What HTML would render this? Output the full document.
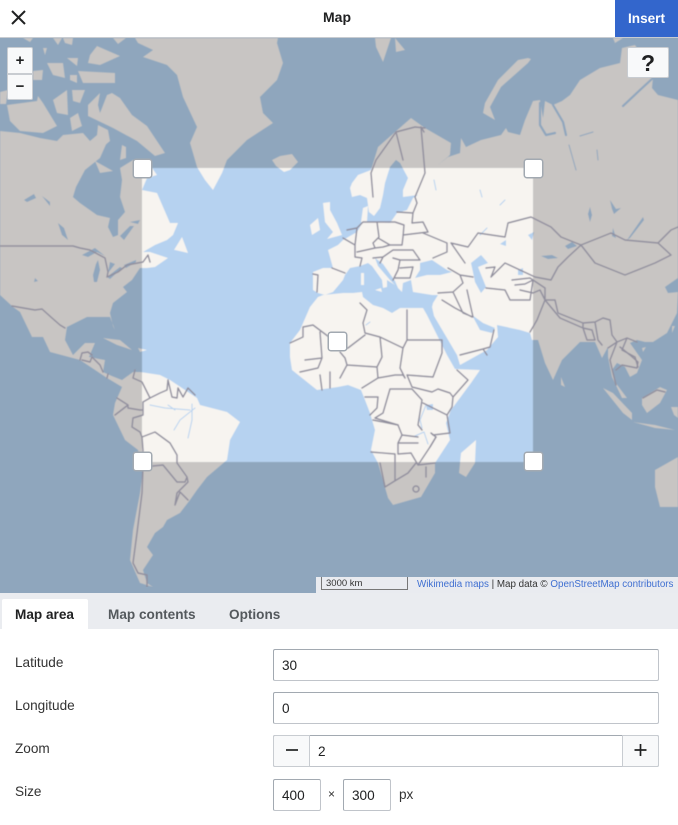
<!DOCTYPE html>
<html lang="en">
<head>
<meta charset="utf-8">
<title>Map</title>
<style>
html,body{margin:0;padding:0;background:#fff}
body{width:678px;height:825px;position:relative;overflow:hidden;font-family:"Liberation Sans",sans-serif;color:#202122;font-size:13.6px}
.abs{position:absolute}
svg.map{position:absolute;left:0;top:0}
.l{fill:var(--l);stroke:none}
.w{fill:var(--w);stroke:none}
.wl{fill:none;stroke:var(--w);stroke-linecap:round;stroke-linejoin:round}
.b{fill:none;stroke:#918f9e;stroke-width:1.45;stroke-linejoin:round;stroke-linecap:round}
.h{position:absolute;width:17px;height:17px;background:#fff;border:1px solid #a2a9b1;border-radius:3px;box-shadow:0 0 0 .5px #a2a9b1}
.ctl{position:absolute;background:#f8f9fa;border:1px solid #c8ccd1;box-sizing:border-box;text-align:center;font-weight:bold;color:#202122}
.tab{position:absolute;top:599px;height:30px;line-height:31px;font-weight:bold;color:#54595d}
.lab{position:absolute;left:15px;color:#333;line-height:20px}
.inp{position:absolute;box-sizing:border-box;height:32px;border:1px solid #a2a9b1;border-radius:2px;background:#fff;padding-left:8px;line-height:31px;color:#202122;border-bottom-color:#c0c4ca;border-right-color:#c0c4ca}
.btn{position:absolute;box-sizing:border-box;width:37px;height:32px;background:#f8f9fa;border:1px solid #c8ccd1;top:735px}
</style>
</head>
<body>
<svg class="map" width="678" height="593" viewBox="0 0 678 593" xmlns="http://www.w3.org/2000/svg">
<defs>
<filter id="s" x="0" y="0" width="1" height="1"><feGaussianBlur stdDeviation="0.5"/></filter>
<clipPath id="hi"><rect x="142" y="168" width="391" height="294"/></clipPath>
<g id="world">
<path class="l" d="M135,38 138,43 153,50 143,57 167,65 177,75 183,97 197,127 190,143 197,167 205,180 213,190 222,173 227,160 247,140 273,123 263,113 260,97 277,80 283,63 277,43 278,38Z"/>
<path class="l" d="M272,160 280,156 292,154 298,162 290,170 284,172 276,166Z"/>
<path class="l" d="M0,131 20,133 40,138 57,141 63,135 83,133 90,141 97,135 108,140 100,158 85,170 76,187 73,197 80,203 97,215 110,218 108,227 113,237 118,235 118,220 125,212 120,197 122,180 120,168 133,160 142,166 152,168 157,175 147,178 142,190 157,193 170,223 178,223 173,235 167,240 155,245 143,252 150,252 168,258 155,267 147,268 140,268 132,280 123,287 127,292 113,303 110,313 113,326 115,330 110,317 87,317 67,327 65,340 73,355 85,343 95,343 89,357 105,360 103,372 112,376 122,380 133,372 140,372 160,375 170,380 197,398 200,405 227,412 240,422 230,440 227,460 207,477 197,490 190,500 180,513 167,520 163,527 155,533 147,547 153,555 143,570 147,583 153,587 140,583 130,560 133,530 140,493 143,470 138,450 125,440 113,415 115,403 122,387 107,378 98,372 80,360 50,352 43,337 32,337 20,312 13,307 0,295Z"/>
<path class="l" d="M112,93 120,98 132,115 147,126 165,153 155,156 137,141 113,128 88,116 88,105 100,93 98,105 100,113 107,95Z"/>
<path class="l" d="M7,105 37,101 38,96 43,103 57,126 43,133 20,131 10,121Z"/>
<path class="l" d="M53,100 67,90 68,115 57,113Z M72,90 85,90 80,103 73,101Z M70,118 78,113 82,126 72,131Z M78,71 115,73 115,83 83,83Z M90,55 97,46 120,56 100,65 88,63Z M67,58 78,58 77,66Z M70,75 77,75 77,83 70,80Z M47,63 63,63 65,78 53,75Z M33,71 43,70 42,80 33,80Z M63,38 73,38 72,45 65,43Z M23,38 33,38 30,42Z M53,38 62,38 58,45Z M43,48 47,48 45,55Z M113,38 126,38 118,44Z M0,92 8,90 6,104 0,104Z M95,161 113,171 100,173Z M120,160 126,158 126,147 122,145Z M126,166 136,160 142,166 132,172Z M98,125 108,130 110,141 103,147 97,135Z"/>
<path class="l" d="M174,250 182,237 188,253 175,250Z M103,338 120,340 132,350 117,345Z M138,348 147,350 140,352Z"/>
<path class="l" d="M352,183 358,175 371,170 378,147 395,132 411,118 425,128 451,143 450,155 438,165 448,157 460,153 461,138 466,147 481,140 501,135 506,128 508,132 520,135 525,120 533,101 540,100 543,118 545,101 553,105 562,101 570,95 580,80 600,68 620,63 622,48 635,45 645,60 653,78 652,88 658,95 678,100 678,278 665,287 668,293 678,292 677,313 667,333 653,342 645,342 637,340 630,343 642,360 637,373 630,377 625,367 617,363 612,370 615,382 627,398 622,398 612,377 608,357 608,347 602,358 595,342 580,342 562,360 553,380 545,363 538,340 532,340 530,333 520,330 497,325 498,337 487,350 460,365 457,355 444,333 434,316 432,307 433,303 438,295 432,295 413,292 411,280 403,283 402,292 398,288 395,281 383,264 375,258 378,266 390,280 395,285 387,280 387,287 383,288 382,280 372,266 368,263 360,266 350,268 345,275 343,280 333,292 325,295 318,293 313,290 313,272 323,268 333,268 328,250 338,245 343,240 357,232 363,222 377,222 390,223 397,213 407,210 413,198 418,195 403,197 403,190 408,178 400,163 396,160 390,167 385,183 383,195 380,208 374,216 369,212 367,198 360,195 352,197 350,188Z"/>
<path class="l" d="M528,58 518,60 498,80 485,103 483,113 495,120 490,107 501,87 528,63 531,59Z M375,38 391,38 383,62 376,47Z M395,38 405,50 396,52Z M613,38 623,38 615,43Z"/>
<path class="l" d="M363,208 368,206 367,222 361,222Z M323,203 330,202 330,210 337,223 342,235 327,239 333,232 325,222Z M310,225 318,218 320,230 312,235Z M361,273 364,273 364,285 361,285Z M375,290 381,288 382,292Z"/>
<path class="l" d="M310,307 318,297 323,295 343,293 353,293 362,292 363,297 373,305 383,308 392,313 400,308 423,308 427,315 447,355 455,369 480,370 471,383 451,410 446,423 450,440 435,463 435,473 421,497 393,505 388,498 378,463 371,450 375,430 370,413 365,400 361,390 348,385 338,387 317,390 292,370 290,357 290,343 300,330Z"/>
<path class="l" d="M476,440 475,463 466,477 459,473 461,453Z M561,377 565,387 561,385Z M642,348 646,347 643,352Z M672,326 675,326 672,333Z"/>
<path class="l" d="M642,398 660,387 667,390 660,403 647,413 642,405Z M603,388 613,393 632,413 632,420 623,413Z M633,422 655,425 675,430 655,428Z M671,407 678,407 678,418 674,415Z M655,470 678,457 678,507 660,507 655,487Z"/>
<path class="w" d="M420,263 432,260 447,270 452,272 440,275 427,275 415,278 420,270Z M471,263 481,255 488,263 478,267 486,287 481,293 475,282 473,272Z M472,315 480,330 492,333 495,328 483,323Z M627,240 643,217 644,220 630,238Z M541,256 552,255 558,258 548,259Z M426,405 433,404 433,410 427,410Z M518,270 523,268 523,275 518,275Z"/>
<path class="w" d="M93,275 96,264 98,260 100,270 97,282 94,282Z M82,255 95,248 105,256 97,252 88,257Z M105,260 115,264 108,273 110,262Z M107,277 120,267 122,268 110,279Z M124,265 136,260 136,262 126,268Z M58,223 64,228 68,240 62,235Z M24,200 34,194 36,198 27,202Z M42,196 50,202 50,206Z M120,236 130,226 134,226 124,240Z M130,222 140,220 138,224Z M35,278 38,281 34,282Z"/>
<path class="w" d="M528,235 534,232 532,240Z M500,244 506,240 506,246Z M610,200 616,209 621,208 614,214 612,209Z M565,246 572,242 577,246 568,249Z M590,207 592,215 590,222 588,214Z M613,228 616,238 612,236Z"/>
<path class="wl" stroke-width="2.2" d="M653,78 640,90 623,106 M540,103 540,125 546,135 555,133 M553,105 563,122 566,135"/>
<path class="wl" stroke-width="1" d="M569,145 576,170 M580,136 593,132 M597,150 598,160 M150,405 165,408 190,410 M195,408 180,420 174,430 M192,404 192,420 188,438 M168,405 175,410 M415,436 424,432 428,444 M426,405 420,420 422,428 M366,325 370,322 M480,190 482,197 M434,180 436,190 M500,205 505,200 M480,235 487,228"/>
</g>
<g id="bord">
<path class="b" d="M0,246H73L80,248 90,250 105,258 108,272 107,277 118,272 127,265 143,262 148,255 150,262M12,306 35,310 42,309 52,318 60,325 65,328M80,360 82,353 88,352 92,355M82,360 90,362 92,357 100,365 103,372M107,378 108,374"/>
<path class="b" d="M135,370 133,378 142,382 150,398 143,402 143,415 133,418 132,427 140,432 142,437 143,450 143,467 142,493 137,533 133,563 138,573 147,575 147,587M117,398 128,405 128,408 140,410 143,410M115,415 128,405M150,398 160,393 167,390 168,380 172,397 177,398 178,388 183,397 188,388 195,395M142,437 155,432 170,443 177,455 177,463 187,477 185,482 177,482 163,465 143,467M187,477 188,482 177,493 175,505 180,492 188,500"/>
<path class="b" d="M360,303 367,310 363,323 365,333 380,337 403,348M407,310V340H442M403,348 407,340M403,348 400,368 405,378M380,337 382,357 377,367 378,378 395,375 403,375 405,378M365,335 348,348 340,350M290,343 303,337 303,327 313,325 333,340M320,332 322,358 305,360M442,340 442,353 433,377 407,375 412,387 432,392 438,389M457,370 468,380 453,397 452,407M438,389 450,393 453,397M452,407 447,415 423,403M390,389 412,389 422,400 418,425 422,430M390,389 383,413 375,418 398,425 402,435 418,437M365,397 378,397 377,408 370,415M347,365 377,367M378,378 362,388M423,403 447,415 450,433 433,435 431,433 436,437 430,447M340,352 345,358 347,365 340,378M300,372 318,368 322,358M320,375 322,390M330,372 330,388"/>
<path class="b" d="M371,452 395,454 395,480M373,420 398,425M398,443 398,454M398,454 411,453 418,465 435,463M426,467 426,477M380,463 385,487 393,482 408,473 416,463M436,437 430,447 418,465M402,435 398,443 418,443"/>
<circle class="b" cx="416" cy="489" r="3"/>
<path class="b" d="M332,268 345,273M313,274 318,275 317,292M343,238 355,245 355,257 362,258 360,266M347,230 357,228 355,245M357,228 363,222 377,222 379,237 373,243 375,248 357,252M377,222H395L404,225 403,237 402,245 390,245 378,238M375,248 383,247 390,245 402,245M373,258 383,257 393,250 400,250 413,250 420,260 400,260 398,270 393,280M383,257 380,263M393,258 400,260M400,268 413,267 410,278 395,278M397,212 413,213 412,223 423,222 428,232 403,235M423,233 447,243 447,252 433,258M417,203 413,213M421,127 425,173 415,197 417,203M396,132 403,160M396,132 376,160 371,173 373,197M396,132 415,127 425,128M424,132 421,127"/>
<path class="b" d="M451,243 465,263 M468,247 478,233 505,237 508,223 531,217 551,227 561,237 581,245 611,233 625,240 658,243 671,230 678,227M468,247 451,243M581,245 595,263 625,275 655,263 671,255 658,243M581,245 568,257 558,267 551,280 535,277 505,263 491,277 495,267 486,268M448,268 460,275 473,277M438,293 453,292 463,283 460,275M453,292 463,313 473,317 467,290M442,300 455,308 472,317M460,355 483,349 487,355M483,349 490,347 494,330"/>
<path class="b" d="M486,288 505,290 510,300 530,300 533,280 545,288 545,300 537,320 530,332M520,290 533,293 540,290 545,300 555,300 558,313 583,323 583,328 560,318 545,300M583,323 595,322 603,318 610,320 612,335 617,342 627,338 637,342M583,328 587,340 595,340 592,330 583,328M595,322 598,340 602,345M608,348 617,342 610,360 613,373 616,385M620,347 630,355 638,362 637,368 622,365 616,370M627,338 622,350 635,357 638,367M643,398 657,390 665,392M512,280 530,278 533,280 525,284 515,285"/>
</g>
</defs>
<rect width="678" height="593" fill="#8fa6bd"/>
<g filter="url(#s)">
<use href="#world" style="--l:#c8c5c3;--w:#8fa6bd"/>
<g clip-path="url(#hi)">
<rect x="142" y="168" width="391" height="294" fill="#b6d2f0"/>
<use href="#world" style="--l:#f7f4f0;--w:#b6d2f0"/>
</g>
<use href="#bord"/>
</g>
</svg>

<div class="h" style="left:133px;top:159px"></div>
<div class="h" style="left:524px;top:159px"></div>
<div class="h" style="left:133px;top:452px"></div>
<div class="h" style="left:524px;top:452px"></div>
<div class="h" style="left:328px;top:332px"></div>

<div class="ctl" style="left:7px;top:47px;width:26px;height:27px;line-height:25px;font-size:15px;border-radius:2px 2px 0 0">+</div>
<div class="ctl" style="left:7px;top:74px;width:26px;height:26px;line-height:24px;font-size:15px;border-radius:0 0 2px 2px">&#8722;</div>
<div class="ctl" style="left:627px;top:47px;width:42px;height:31px;line-height:31px;font-size:23px;border-radius:2px">?</div>

<div class="abs" style="left:316px;top:577px;width:362px;height:16px;background:#e9ebf0"></div>
<div class="abs" style="left:321px;top:577px;width:87px;height:13px;box-sizing:border-box;border:1px solid #777;border-top:0;font-size:9.5px;line-height:13px;padding-left:4px;color:#333;background:#e9ebf0">3000 km</div>
<div class="abs" style="left:417px;top:579px;font-size:9.8px;line-height:12px;white-space:nowrap;color:#333"><span style="color:#3f6fd1">Wikimedia maps</span> | Map data © <span style="color:#3f6fd1">OpenStreetMap contributors</span></div>

<div class="abs" style="left:0;top:0;width:678px;height:38px;background:#fff;border-bottom:1px solid #c8ccd1;box-sizing:border-box"></div>
<svg class="abs" style="left:11px;top:10px" width="15" height="15" viewBox="0 0 15 15"><path d="M1,1 14,14M14,1 1,14" stroke="#202122" stroke-width="2" fill="none"/></svg>
<div class="abs" style="left:0;top:9px;width:674px;text-align:center;font-weight:bold;line-height:17px;font-size:14px">Map</div>
<div class="abs" style="left:615px;top:0;width:63px;height:37px;background:#3366cc;color:#fff;font-weight:bold;text-align:center;line-height:37px">Insert</div>

<div class="abs" style="left:0;top:593px;width:678px;height:36px;background:#eaecf0"></div>
<div class="abs" style="left:2px;top:599px;width:86px;height:30px;background:#fff;border-radius:2px 2px 0 0"></div>
<div class="tab" style="left:15px;color:#202122">Map area</div>
<div class="tab" style="left:108px">Map contents</div>
<div class="tab" style="left:229px">Options</div>

<div class="lab" style="top:653px">Latitude</div>
<div class="lab" style="top:696px">Longitude</div>
<div class="lab" style="top:739px">Zoom</div>
<div class="lab" style="top:782px">Size</div>

<div class="inp" style="left:273px;top:649px;width:386px">30</div>
<div class="inp" style="left:273px;top:692px;width:386px">0</div>
<div class="inp" style="left:273px;top:735px;width:386px;padding-left:44px">2</div>
<div class="btn" style="left:273px;border-radius:2px 0 0 2px"><svg width="35" height="30" viewBox="0 0 35 30" style="display:block"><path d="M12,14H24" stroke="#202122" stroke-width="1.7"/></svg></div>
<div class="btn" style="left:622px;border-radius:0 2px 2px 0"><svg width="35" height="30" viewBox="0 0 35 30" style="display:block"><path d="M11.500,14H23.500M17.500,8V20" stroke="#202122" stroke-width="1.7"/></svg></div>
<div class="inp" style="left:273px;top:779px;width:48px">400</div>
<div class="abs" style="left:328px;top:785px;font-size:12px;line-height:18px;color:#333">×</div>
<div class="inp" style="left:343px;top:779px;width:48px">300</div>
<div class="abs" style="left:399px;top:786px;line-height:18px;color:#333">px</div>
</body>
</html>
